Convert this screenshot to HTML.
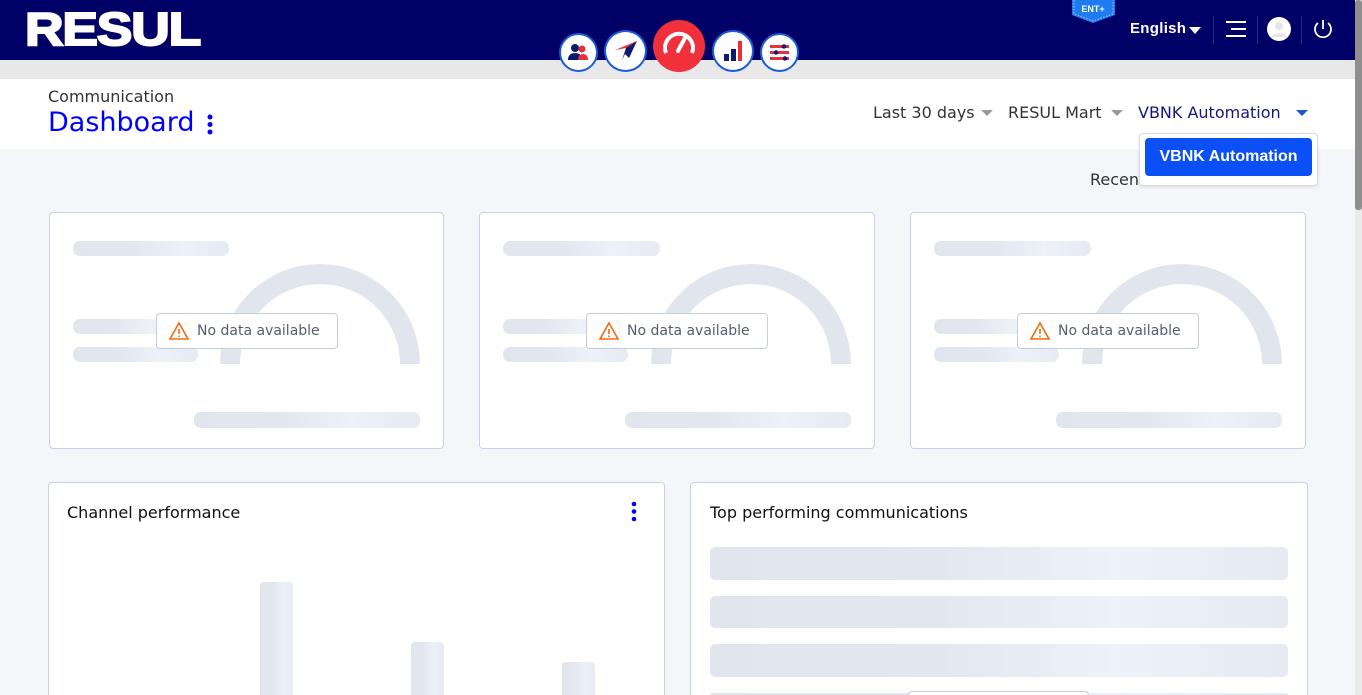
<!DOCTYPE html>
<html><head><meta charset="utf-8"><style>
*{box-sizing:border-box;margin:0;padding:0}
html{width:1362px;height:695px;overflow:hidden}
body{width:1362px;height:695px;overflow:hidden;position:relative;background:#f5f6fa;font-family:"DejaVu Sans","Liberation Sans",sans-serif}
.abs{position:absolute}
.hdr{left:0;top:0;width:1355px;height:60px;background:#000066}
.gray{left:0;top:60px;width:1355px;height:19px;background:#e8e8e8}
.white{left:0;top:79px;width:1355px;height:70px;background:#fff}
.sk{position:absolute;background:linear-gradient(90deg,#e1e5ed 0%,#e3e7ef 40%,#edf1f8 70%,#e6eaf2 100%);border-radius:7px}
.card{position:absolute;background:#fff;border:1px solid #c8d2e6;border-radius:4px;overflow:hidden}
.nd{position:absolute;background:#fff;border:1px solid #c3cde0;border-radius:4px;width:182px;height:36px;font-size:14px;color:#555d6e;line-height:34px;padding-left:40px}
.nd svg{position:absolute;left:12px;top:7px}
.ic{position:absolute;border-radius:50%;background:#fff;border:2px solid #1a5bd8}
</style></head><body>
<div class="abs hdr"></div>
<div class="abs gray"></div>
<div class="abs white"></div>
<div class="abs" style="left:25px;top:4px;color:#fff;font-weight:bold;font-size:46px;letter-spacing:-1px;font-family:'Liberation Sans',sans-serif;line-height:50px;transform:scaleX(1.16);transform-origin:left;-webkit-text-stroke:2px #fff">RESUL</div>

<!-- nav icons -->
<div class="ic" style="left:559px;top:33px;width:39px;height:39px"><svg width="35" height="35" viewBox="0 0 35 35"><circle cx="14" cy="13" r="4" fill="#0a1a6e"/><path d="M7 25c0-5 3-7 7-7s7 2 7 7z" fill="#0a1a6e"/><circle cx="21" cy="14" r="3.5" fill="#e8303a"/><path d="M17 25c0-4 2-6 5-6s5 2 5 6z" fill="#e8303a"/></svg></div>
<div class="ic" style="left:604px;top:30px;width:43px;height:42px"><svg width="39" height="38" viewBox="0 0 39 38"><path d="M9 18L31 9 20 16z" fill="#e8303a"/><path d="M31 9L20 16 16 28 19 22 23 26z" fill="#0a1a6e"/></svg></div>
<div class="abs" style="left:653px;top:20px;width:52px;height:52px;border-radius:50%;background:#f0303a"><svg width="52" height="52" viewBox="0 0 52 52"><path d="M13 33a14 14 0 1 1 26 0" fill="none" stroke="#fff" stroke-width="4"/><path d="M33 16l-8 15" stroke="#fff" stroke-width="4" stroke-linecap="round"/></svg></div>
<div class="ic" style="left:712px;top:30px;width:42px;height:42px"><svg width="38" height="38" viewBox="0 0 38 38"><rect x="10" y="22" width="5" height="7" fill="#0a1a6e"/><rect x="17" y="17" width="5" height="12" fill="#0a1a6e"/><rect x="24" y="9" width="4" height="20" fill="#e8303a"/></svg></div>
<div class="ic" style="left:760px;top:33px;width:39px;height:39px"><svg width="35" height="35" viewBox="0 0 35 35"><rect x="8" y="10" width="19" height="3" fill="#e8303a"/><rect x="8" y="16" width="19" height="3" fill="#e8303a"/><rect x="8" y="22" width="19" height="3" fill="#e8303a"/><circle cx="22" cy="11.5" r="2.2" fill="#0a1a6e"/><circle cx="14" cy="17.5" r="2.2" fill="#0a1a6e"/><circle cx="23" cy="23.5" r="2.2" fill="#0a1a6e"/></svg></div>

<!-- ENT+ badge -->
<svg class="abs" style="left:1071px;top:0" width="45" height="24" viewBox="0 0 45 24"><path d="M1 0V15L22 23 44 15V0z" fill="#1f7bf0"/><path d="M3 0V14L22 21 42 14V0" fill="none" stroke="#9cc8ff" stroke-width="1" stroke-dasharray="1.5 1.5"/><text x="22" y="12" text-anchor="middle" font-family="Liberation Sans" font-weight="bold" font-size="9" fill="#fff">ENT+</text></svg>

<div class="abs" style="left:1130px;top:20px;color:#fff;font-size:15px;font-weight:bold;font-family:'Liberation Sans',sans-serif;letter-spacing:0.3px">English</div>
<svg class="abs" style="left:1189px;top:27px" width="12" height="8"><path d="M0 0h12L6 7z" fill="#fff"/></svg>
<div class="abs" style="left:1213px;top:16px;width:1px;height:28px;background:#2a2a80"></div>
<svg class="abs" style="left:1226px;top:20px" width="22" height="18"><rect x="0" y="1" width="20" height="2" fill="#fff"/><rect x="5" y="8" width="15" height="2" fill="#fff"/><rect x="0" y="15" width="20" height="2" fill="#fff"/></svg>
<div class="abs" style="left:1257px;top:16px;width:1px;height:28px;background:#2a2a80"></div>
<svg class="abs" style="left:1267px;top:17px" width="24" height="24"><circle cx="12" cy="12" r="12" fill="#fff"/><circle cx="12" cy="9" r="4" fill="#e6e6e6"/><path d="M4 20c2-5 14-5 16 0" fill="#e6e6e6"/></svg>
<div class="abs" style="left:1301px;top:16px;width:1px;height:28px;background:#2a2a80"></div>
<svg class="abs" style="left:1312px;top:18px" width="22" height="22"><path d="M6 5a8 8 0 1 0 10 0" fill="none" stroke="#fff" stroke-width="1.8"/><path d="M11 2v9" stroke="#fff" stroke-width="1.8"/></svg>

<!-- scrollbar -->
<div class="abs" style="left:1355px;top:0;width:7px;height:695px;background:#ebebeb"></div>
<div class="abs" style="left:1355px;top:0;width:7px;height:210px;background:#8f8f8f;border-radius:3px"></div>

<div class="abs" style="left:48px;top:87px;font-size:16px;color:#333">Communication</div>
<div class="abs" style="left:48px;top:107px;font-size:27px;color:#0000ff">Dashboard</div>
<svg class="abs" style="left:206px;top:114px" width="8" height="22"><circle cx="4" cy="3" r="2.5" fill="#0000ff"/><circle cx="4" cy="10.5" r="2.5" fill="#0000ff"/><circle cx="4" cy="18" r="2.5" fill="#0000ff"/></svg>

<div class="abs" style="left:873px;top:103px;font-size:16px;color:#333">Last 30 days</div>
<svg class="abs" style="left:981px;top:110px" width="12" height="7"><path d="M0 0h12L6 6z" fill="#999"/></svg>
<div class="abs" style="left:1008px;top:103px;font-size:16px;color:#333">RESUL Mart</div>
<svg class="abs" style="left:1111px;top:110px" width="12" height="7"><path d="M0 0h12L6 6z" fill="#999"/></svg>
<div class="abs" style="left:1138px;top:103px;font-size:16px;color:#151580">VBNK Automation</div>
<svg class="abs" style="left:1296px;top:110px" width="12" height="7"><path d="M0 0h12L6 6z" fill="#1c56d8"/></svg>

<div class="abs" style="left:1090px;top:170px;font-size:16px;color:#333">Recen</div>
<div class="abs" style="left:1139px;top:133px;width:179px;height:53px;background:#fff;border:1px solid #d4dbe8;border-radius:4px;box-shadow:0 1px 3px rgba(0,0,0,.1)"></div>
<div class="abs" style="left:1145px;top:138px;width:167px;height:38px;background:#0b4ff7;border-radius:4px;color:#fff;font-size:16px;font-weight:bold;font-family:'Liberation Sans',sans-serif;text-align:center;line-height:37px">VBNK Automation</div>

<!-- top cards -->
<div class="card" style="left:49px;top:212px;width:395px;height:237px"></div>
<div class="card" style="left:479px;top:212px;width:396px;height:237px"></div>
<div class="card" style="left:910px;top:212px;width:396px;height:237px"></div>

<!-- card 1 -->
<div class="sk" style="left:73px;top:241px;width:156px;height:15px"></div>
<div class="sk" style="left:73px;top:319px;width:110px;height:15px"></div>
<div class="sk" style="left:73px;top:347px;width:125px;height:15px"></div>
<div class="sk" style="left:194px;top:412px;width:226px;height:16px"></div>
<svg class="abs" style="left:220px;top:263px" width="201" height="101"><path d="M10 101a90 90 0 0 1 180 0" fill="none" stroke="#e1e6ee" stroke-width="20"/></svg>
<div class="nd" style="left:156px;top:313px"><svg width="20" height="20" viewBox="0 0 20 20"><path d="M10 2L19 18H1z" fill="none" stroke="#f06a10" stroke-width="1.6"/><path d="M10 8v5" stroke="#f06a10" stroke-width="1.6"/><circle cx="10" cy="15.3" r=".9" fill="#f06a10"/></svg>No data available</div>

<!-- card 2 -->
<div class="sk" style="left:503px;top:241px;width:157px;height:15px"></div>
<div class="sk" style="left:503px;top:319px;width:110px;height:15px"></div>
<div class="sk" style="left:503px;top:347px;width:125px;height:15px"></div>
<div class="sk" style="left:625px;top:412px;width:226px;height:16px"></div>
<svg class="abs" style="left:651px;top:263px" width="201" height="101"><path d="M10 101a90 90 0 0 1 180 0" fill="none" stroke="#e1e6ee" stroke-width="20"/></svg>
<div class="nd" style="left:586px;top:313px"><svg width="20" height="20" viewBox="0 0 20 20"><path d="M10 2L19 18H1z" fill="none" stroke="#f06a10" stroke-width="1.6"/><path d="M10 8v5" stroke="#f06a10" stroke-width="1.6"/><circle cx="10" cy="15.3" r=".9" fill="#f06a10"/></svg>No data available</div>

<!-- card 3 -->
<div class="sk" style="left:934px;top:241px;width:157px;height:15px"></div>
<div class="sk" style="left:934px;top:319px;width:110px;height:15px"></div>
<div class="sk" style="left:934px;top:347px;width:125px;height:15px"></div>
<div class="sk" style="left:1056px;top:412px;width:226px;height:16px"></div>
<svg class="abs" style="left:1082px;top:263px" width="201" height="101"><path d="M10 101a90 90 0 0 1 180 0" fill="none" stroke="#e1e6ee" stroke-width="20"/></svg>
<div class="nd" style="left:1017px;top:313px"><svg width="20" height="20" viewBox="0 0 20 20"><path d="M10 2L19 18H1z" fill="none" stroke="#f06a10" stroke-width="1.6"/><path d="M10 8v5" stroke="#f06a10" stroke-width="1.6"/><circle cx="10" cy="15.3" r=".9" fill="#f06a10"/></svg>No data available</div>

<!-- bottom cards -->
<div class="card" style="left:48px;top:482px;width:617px;height:213px;border-bottom:none;border-radius:4px 4px 0 0"></div>
<div class="card" style="left:690px;top:482px;width:618px;height:213px;border-bottom:none;border-radius:4px 4px 0 0"></div>
<div class="abs" style="left:67px;top:503px;font-size:16px;color:#111">Channel performance</div>
<svg class="abs" style="left:630px;top:501px" width="8" height="22"><circle cx="4" cy="3" r="2.3" fill="#0000ff"/><circle cx="4" cy="10.5" r="2.3" fill="#0000ff"/><circle cx="4" cy="18" r="2.3" fill="#0000ff"/></svg>
<div class="sk" style="left:260px;top:582px;width:33px;height:113px;border-radius:4px 4px 0 0"></div>
<div class="sk" style="left:411px;top:642px;width:33px;height:53px;border-radius:4px 4px 0 0"></div>
<div class="sk" style="left:562px;top:662px;width:33px;height:33px;border-radius:4px 4px 0 0"></div>

<div class="abs" style="left:710px;top:503px;font-size:16px;color:#111">Top performing communications</div>
<div class="sk" style="left:710px;top:547px;width:578px;height:33px;border-radius:5px"></div>
<div class="sk" style="left:710px;top:596px;width:578px;height:32px;border-radius:5px"></div>
<div class="sk" style="left:710px;top:644px;width:578px;height:33px;border-radius:5px"></div>
<div class="sk" style="left:710px;top:693px;width:578px;height:2px;border-radius:2px 2px 0 0"></div>
<div class="abs" style="left:908px;top:691px;width:181px;height:4px;background:#fff;border:1px solid #c3cde0;border-bottom:none;border-radius:4px 4px 0 0"></div>
</body></html>
